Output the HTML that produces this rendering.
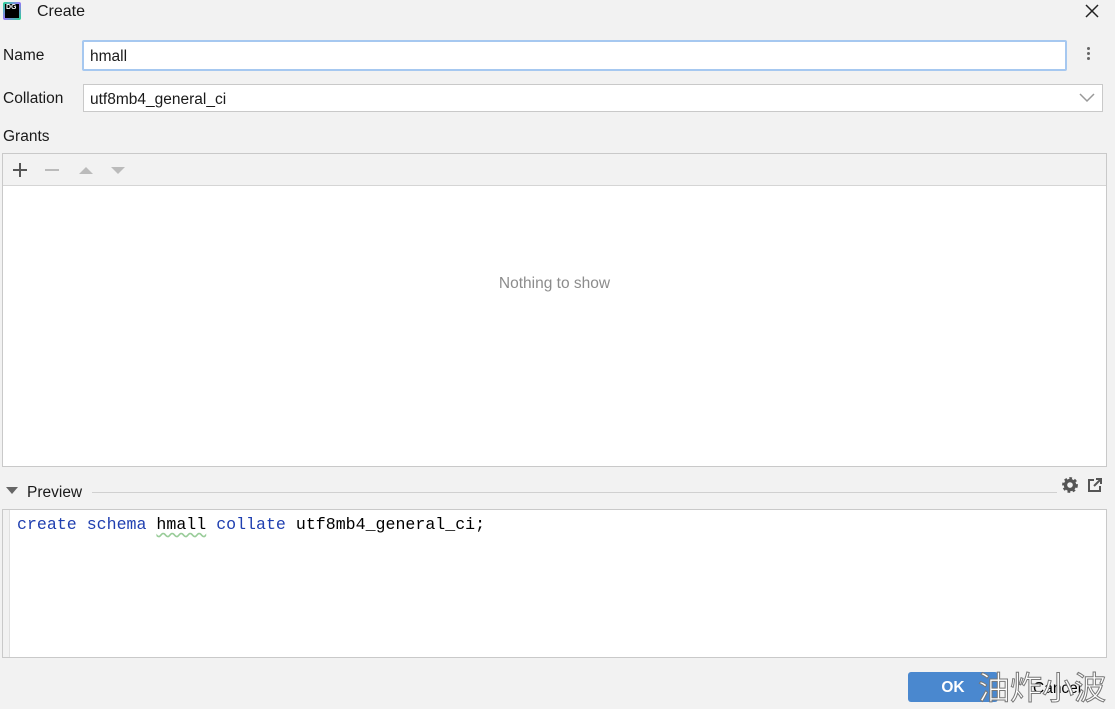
<!DOCTYPE html>
<html><head><meta charset="utf-8"><style>
*{margin:0;padding:0;box-sizing:border-box}
body{width:1115px;height:709px;background:#f2f2f2;font-family:"Liberation Sans","Noto Sans CJK SC",sans-serif;font-size:15.5px;color:#1a1a1a;position:relative;overflow:hidden}
.a{position:absolute}
.mono{font-family:"Liberation Mono",monospace;font-size:16.6px}
</style></head><body>
<div class="a" style="left:3px;top:2px;width:18px;height:18px;background:linear-gradient(135deg,#22d88f,#9775f8,#21d789);border-radius:2px"><div style="position:absolute;left:2px;top:2px;width:14px;height:14px;background:#000;color:#fff;font-size:7px;font-weight:bold;line-height:8px;padding-left:1px">DG</div></div>
<div class="a" style="left:37px;top:3px;font-size:16px">Create</div>
<svg class="a" style="left:1084px;top:3px" width="16" height="16"><path d="M2 2L14 14M14 2L2 14" stroke="#222" stroke-width="1.5"/></svg>

<div class="a" style="left:3px;top:47px">Name</div>
<div class="a" style="left:82px;top:40px;width:985px;height:31px;background:#fff;border:2px solid #a6c8f0;border-radius:2px;padding:6px 0 0 6px">hmall</div>
<div class="a" style="left:1087px;top:47px;width:3px;height:3px;background:#666;border-radius:50%;box-shadow:0 5px 0 #666,0 10px 0 #666"></div>

<div class="a" style="left:3px;top:90px">Collation</div>
<div class="a" style="left:83px;top:84px;width:1020px;height:28px;background:#fff;border:1px solid #c9c9c9;padding:6px 0 0 6px">utf8mb4_general_ci</div>
<svg class="a" style="left:1079px;top:92px" width="16" height="12"><path d="M1 2L8 9L15 2" stroke="#999" stroke-width="1.5" fill="none"/></svg>

<div class="a" style="left:3px;top:128px">Grants</div>
<div class="a" style="left:2px;top:153px;width:1105px;height:314px;border:1px solid #c9c9c9;background:#fff">
 <div style="height:32px;background:#f2f2f2;border-bottom:1px solid #d5d5d5;position:relative">
  <div class="a" style="left:10px;top:15px;width:14px;height:2px;background:#555"></div>
  <div class="a" style="left:16px;top:9px;width:2px;height:14px;background:#555"></div>
  <div class="a" style="left:42px;top:15px;width:14px;height:2px;background:#bbb"></div>
  <svg class="a" style="left:75px;top:11px" width="16" height="10"><path d="M1 9L8 2L15 9Z" fill="#bbb"/></svg>
  <svg class="a" style="left:107px;top:12px" width="16" height="10"><path d="M1 1L8 8L15 1Z" fill="#bbb"/></svg>
 </div>
 <div class="a" style="left:0;right:0;top:121px;text-align:center;color:#8c8c8c">Nothing to show</div>
</div>

<svg class="a" style="left:6px;top:487px" width="12" height="8"><path d="M0 0H12L6 7Z" fill="#666"/></svg>
<div class="a" style="left:27px;top:484px">Preview</div>
<div class="a" style="left:92px;top:492px;width:965px;height:1px;background:#d0d0d0"></div>
<svg class="a" style="left:1061px;top:476px" width="18" height="18" viewBox="0 0 16 16"><circle cx="8" cy="8" r="5.5" fill="none" stroke="#555" stroke-width="3" stroke-dasharray="2.2 2"/><circle cx="8" cy="8" r="4" fill="none" stroke="#555" stroke-width="3"/></svg>
<svg class="a" style="left:1087px;top:477px" width="16" height="16"><path d="M7 3H2V14H13V9" stroke="#555" stroke-width="2" fill="none"/><path d="M7 9L14 2M9 2H14V7" stroke="#555" stroke-width="2" fill="none"/></svg>

<div class="a" style="left:2px;top:509px;width:1105px;height:149px;border:1px solid #c9c9c9;background:#fff">
 <div style="position:absolute;left:0;top:0;width:7px;height:100%;background:#f2f2f2;border-right:1px solid #e0e0e0"></div>
 <div class="a mono" style="left:14px;top:5px;white-space:pre"><span style="color:#1f3fb0">create schema </span><span style="color:#000;text-decoration:underline wavy #9c9;text-underline-offset:3px">hmall</span> <span style="color:#1f3fb0">collate</span> <span style="color:#000">utf8mb4_general_ci;</span></div>
</div>

<div class="a" style="left:908px;top:672px;width:90px;height:30px;background:#4a88cf;border-radius:3px;color:#fff;font-weight:bold;text-align:center;line-height:32px">OK</div>
<div class="a" style="left:1033px;top:680px;color:#000">Cancel</div>
<div class="a" style="left:978px;top:667px;font-size:32px;color:#fff;-webkit-text-stroke:1px #777;font-family:'Noto Sans CJK SC',sans-serif;line-height:38px">油炸小波</div>
</body></html>
